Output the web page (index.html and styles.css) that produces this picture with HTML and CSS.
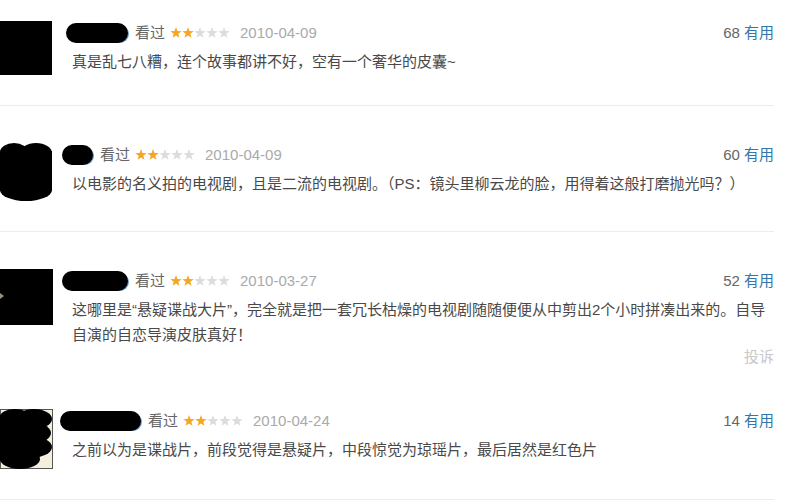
FILE: index.html
```html
<!DOCTYPE html>
<html lang="zh-CN">
<head>
    <meta charset="UTF-8">
    <title>短评</title>
    <link rel="stylesheet" href="styles.css">
</head>
<body>
    <div class="comment-list">

        <div class="comment first">
            <div class="avatar">
                <svg width="52" height="54" viewBox="0 0 52 54"><rect x="0" y="0" width="52" height="54" fill="#000"/></svg>
            </div>
            <div class="comment-main">
                <div class="comment-info">
                    <span class="name" style="width: 62px; margin-left: 4px;"></span>
                    <span class="seen">看过</span>
                    <span class="stars">
                        <svg viewBox="0 0 12 12" class="on"><polygon points="6,0 7.41,4.06 11.71,4.15 8.28,6.74 9.53,10.85 6,8.4 2.47,10.85 3.72,6.74 0.29,4.15 4.59,4.06"/></svg>
                        <svg viewBox="0 0 12 12" class="on"><polygon points="6,0 7.41,4.06 11.71,4.15 8.28,6.74 9.53,10.85 6,8.4 2.47,10.85 3.72,6.74 0.29,4.15 4.59,4.06"/></svg>
                        <svg viewBox="0 0 12 12"><polygon points="6,0 7.41,4.06 11.71,4.15 8.28,6.74 9.53,10.85 6,8.4 2.47,10.85 3.72,6.74 0.29,4.15 4.59,4.06"/></svg>
                        <svg viewBox="0 0 12 12"><polygon points="6,0 7.41,4.06 11.71,4.15 8.28,6.74 9.53,10.85 6,8.4 2.47,10.85 3.72,6.74 0.29,4.15 4.59,4.06"/></svg>
                        <svg viewBox="0 0 12 12"><polygon points="6,0 7.41,4.06 11.71,4.15 8.28,6.74 9.53,10.85 6,8.4 2.47,10.85 3.72,6.74 0.29,4.15 4.59,4.06"/></svg>
                    </span>
                    <span class="date">2010-04-09</span>
                    <span class="votes">68 <a href="#">有用</a></span>
                </div>
                <p class="text">真是乱七八糟，连个故事都讲不好，空有一个奢华的皮囊~</p>
            </div>
        </div>

        <div class="comment">
            <div class="avatar">
                <svg width="52" height="58" viewBox="0 0 52 58">
                    <ellipse cx="14" cy="9" rx="14" ry="9" fill="#000"/>
                    <ellipse cx="36" cy="10" rx="16" ry="10" fill="#000"/>
                    <rect x="0" y="8" width="52" height="40" fill="#000"/>
                    <ellipse cx="26" cy="47" rx="26" ry="11" fill="#000"/>
                    <ellipse cx="46" cy="32" rx="6" ry="12" fill="#000"/>
                </svg>
            </div>
            <div class="comment-main">
                <div class="comment-info">
                    <span class="name" style="width: 31px;"></span>
                    <span class="seen">看过</span>
                    <span class="stars">
                        <svg viewBox="0 0 12 12" class="on"><polygon points="6,0 7.41,4.06 11.71,4.15 8.28,6.74 9.53,10.85 6,8.4 2.47,10.85 3.72,6.74 0.29,4.15 4.59,4.06"/></svg>
                        <svg viewBox="0 0 12 12" class="on"><polygon points="6,0 7.41,4.06 11.71,4.15 8.28,6.74 9.53,10.85 6,8.4 2.47,10.85 3.72,6.74 0.29,4.15 4.59,4.06"/></svg>
                        <svg viewBox="0 0 12 12"><polygon points="6,0 7.41,4.06 11.71,4.15 8.28,6.74 9.53,10.85 6,8.4 2.47,10.85 3.72,6.74 0.29,4.15 4.59,4.06"/></svg>
                        <svg viewBox="0 0 12 12"><polygon points="6,0 7.41,4.06 11.71,4.15 8.28,6.74 9.53,10.85 6,8.4 2.47,10.85 3.72,6.74 0.29,4.15 4.59,4.06"/></svg>
                        <svg viewBox="0 0 12 12"><polygon points="6,0 7.41,4.06 11.71,4.15 8.28,6.74 9.53,10.85 6,8.4 2.47,10.85 3.72,6.74 0.29,4.15 4.59,4.06"/></svg>
                    </span>
                    <span class="date">2010-04-09</span>
                    <span class="votes">60 <a href="#">有用</a></span>
                </div>
                <p class="text">以电影的名义拍的电视剧，且是二流的电视剧。（PS：镜头里柳云龙的脸，用得着这般打磨抛光吗？）</p>
            </div>
        </div>

        <div class="comment no-line">
            <div class="avatar">
                <svg width="53" height="56" viewBox="0 0 53 56">
                    <rect x="0" y="0" width="53" height="56" fill="#000"/>
                    <path d="M0 24 L4 27 L0 30 Z" fill="#9a8f80"/>
                </svg>
            </div>
            <div class="comment-main">
                <div class="comment-info">
                    <span class="name" style="width: 66px;"></span>
                    <span class="seen">看过</span>
                    <span class="stars">
                        <svg viewBox="0 0 12 12" class="on"><polygon points="6,0 7.41,4.06 11.71,4.15 8.28,6.74 9.53,10.85 6,8.4 2.47,10.85 3.72,6.74 0.29,4.15 4.59,4.06"/></svg>
                        <svg viewBox="0 0 12 12" class="on"><polygon points="6,0 7.41,4.06 11.71,4.15 8.28,6.74 9.53,10.85 6,8.4 2.47,10.85 3.72,6.74 0.29,4.15 4.59,4.06"/></svg>
                        <svg viewBox="0 0 12 12"><polygon points="6,0 7.41,4.06 11.71,4.15 8.28,6.74 9.53,10.85 6,8.4 2.47,10.85 3.72,6.74 0.29,4.15 4.59,4.06"/></svg>
                        <svg viewBox="0 0 12 12"><polygon points="6,0 7.41,4.06 11.71,4.15 8.28,6.74 9.53,10.85 6,8.4 2.47,10.85 3.72,6.74 0.29,4.15 4.59,4.06"/></svg>
                        <svg viewBox="0 0 12 12"><polygon points="6,0 7.41,4.06 11.71,4.15 8.28,6.74 9.53,10.85 6,8.4 2.47,10.85 3.72,6.74 0.29,4.15 4.59,4.06"/></svg>
                    </span>
                    <span class="date">2010-03-27</span>
                    <span class="votes">52 <a href="#">有用</a></span>
                </div>
                <p class="text">这哪里是“悬疑谍战大片”，完全就是把一套冗长枯燥的电视剧随随便便从中剪出2个小时拼凑出来的。自导自演的自恋导演皮肤真好！</p>
                <div class="report"><a href="#">投诉</a></div>
            </div>
        </div>

        <div class="comment">
            <div class="avatar">
                <svg width="53" height="60" viewBox="0 0 53 60">
                    <rect x="0.5" y="0.5" width="52" height="59" fill="#f4eedc" stroke="#555" stroke-width="1"/>
                    <ellipse cx="15" cy="8" rx="15" ry="8" fill="#000"/>
                    <ellipse cx="34" cy="10" rx="18" ry="10" fill="#000"/>
                    <ellipse cx="26" cy="24" rx="25" ry="12" fill="#000"/>
                    <ellipse cx="30" cy="38" rx="22" ry="11" fill="#000"/>
                    <ellipse cx="20" cy="50" rx="20" ry="10" fill="#000"/>
                    <rect x="0" y="6" width="22" height="46" fill="#000"/>
                </svg>
            </div>
            <div class="comment-main">
                <div class="comment-info">
                    <span class="name" style="width: 81px; margin-left: -2px;"></span>
                    <span class="seen">看过</span>
                    <span class="stars">
                        <svg viewBox="0 0 12 12" class="on"><polygon points="6,0 7.41,4.06 11.71,4.15 8.28,6.74 9.53,10.85 6,8.4 2.47,10.85 3.72,6.74 0.29,4.15 4.59,4.06"/></svg>
                        <svg viewBox="0 0 12 12" class="on"><polygon points="6,0 7.41,4.06 11.71,4.15 8.28,6.74 9.53,10.85 6,8.4 2.47,10.85 3.72,6.74 0.29,4.15 4.59,4.06"/></svg>
                        <svg viewBox="0 0 12 12"><polygon points="6,0 7.41,4.06 11.71,4.15 8.28,6.74 9.53,10.85 6,8.4 2.47,10.85 3.72,6.74 0.29,4.15 4.59,4.06"/></svg>
                        <svg viewBox="0 0 12 12"><polygon points="6,0 7.41,4.06 11.71,4.15 8.28,6.74 9.53,10.85 6,8.4 2.47,10.85 3.72,6.74 0.29,4.15 4.59,4.06"/></svg>
                        <svg viewBox="0 0 12 12"><polygon points="6,0 7.41,4.06 11.71,4.15 8.28,6.74 9.53,10.85 6,8.4 2.47,10.85 3.72,6.74 0.29,4.15 4.59,4.06"/></svg>
                    </span>
                    <span class="date">2010-04-24</span>
                    <span class="votes">14 <a href="#">有用</a></span>
                </div>
                <p class="text">之前以为是谍战片，前段觉得是悬疑片，中段惊觉为琼瑶片，最后居然是红色片</p>
            </div>
        </div>

    </div>
</body>
</html>
```

FILE: styles.css
```css
body {
    margin: 0;
    background: #fff;
    font-family: "Liberation Sans", "Noto Sans CJK SC", sans-serif;
    font-size: 15px;
    color: #494949;
}
.comment-list {
    width: 774px;
}
.comment {
    display: flex;
    padding: 39px 0 30px;
    border-bottom: 1px solid #ececec;
}
.comment.first {
    padding-top: 23px;
}
.comment.no-line {
    padding-bottom: 5px;
    border-bottom: none;
}
.avatar {
    width: 52px;
    flex-shrink: 0;
    margin-top: -2px;
}
.avatar svg {
    display: block;
}
.comment-main {
    flex: 1;
    margin-left: 10px;
}
.comment-info {
    display: flex;
    align-items: center;
    height: 20px;
    line-height: 20px;
}
.name {
    display: inline-block;
    height: 20px;
    background: #000;
    border-radius: 10px;
    box-shadow: 2px 1px 0 -1px #6a9fd0;
}
.seen {
    color: #666;
    margin-left: 7px;
}
.stars {
    display: flex;
    margin-left: 5px;
}
.stars svg {
    width: 12px;
    height: 12px;
    fill: #dcdcdc;
}
.stars svg.on {
    fill: #f5a623;
}
.date {
    color: #aaa;
    margin-left: 10px;
}
.votes {
    margin-left: auto;
    color: #666;
}
.votes a {
    color: #37a;
    text-decoration: none;
}
.text {
    margin: 6px 0 0;
    padding-left: 10px;
    line-height: 25px;
}
.report {
    text-align: right;
    line-height: 20px;
}
.report a {
    color: #c8c8c8;
    text-decoration: none;
}
```
